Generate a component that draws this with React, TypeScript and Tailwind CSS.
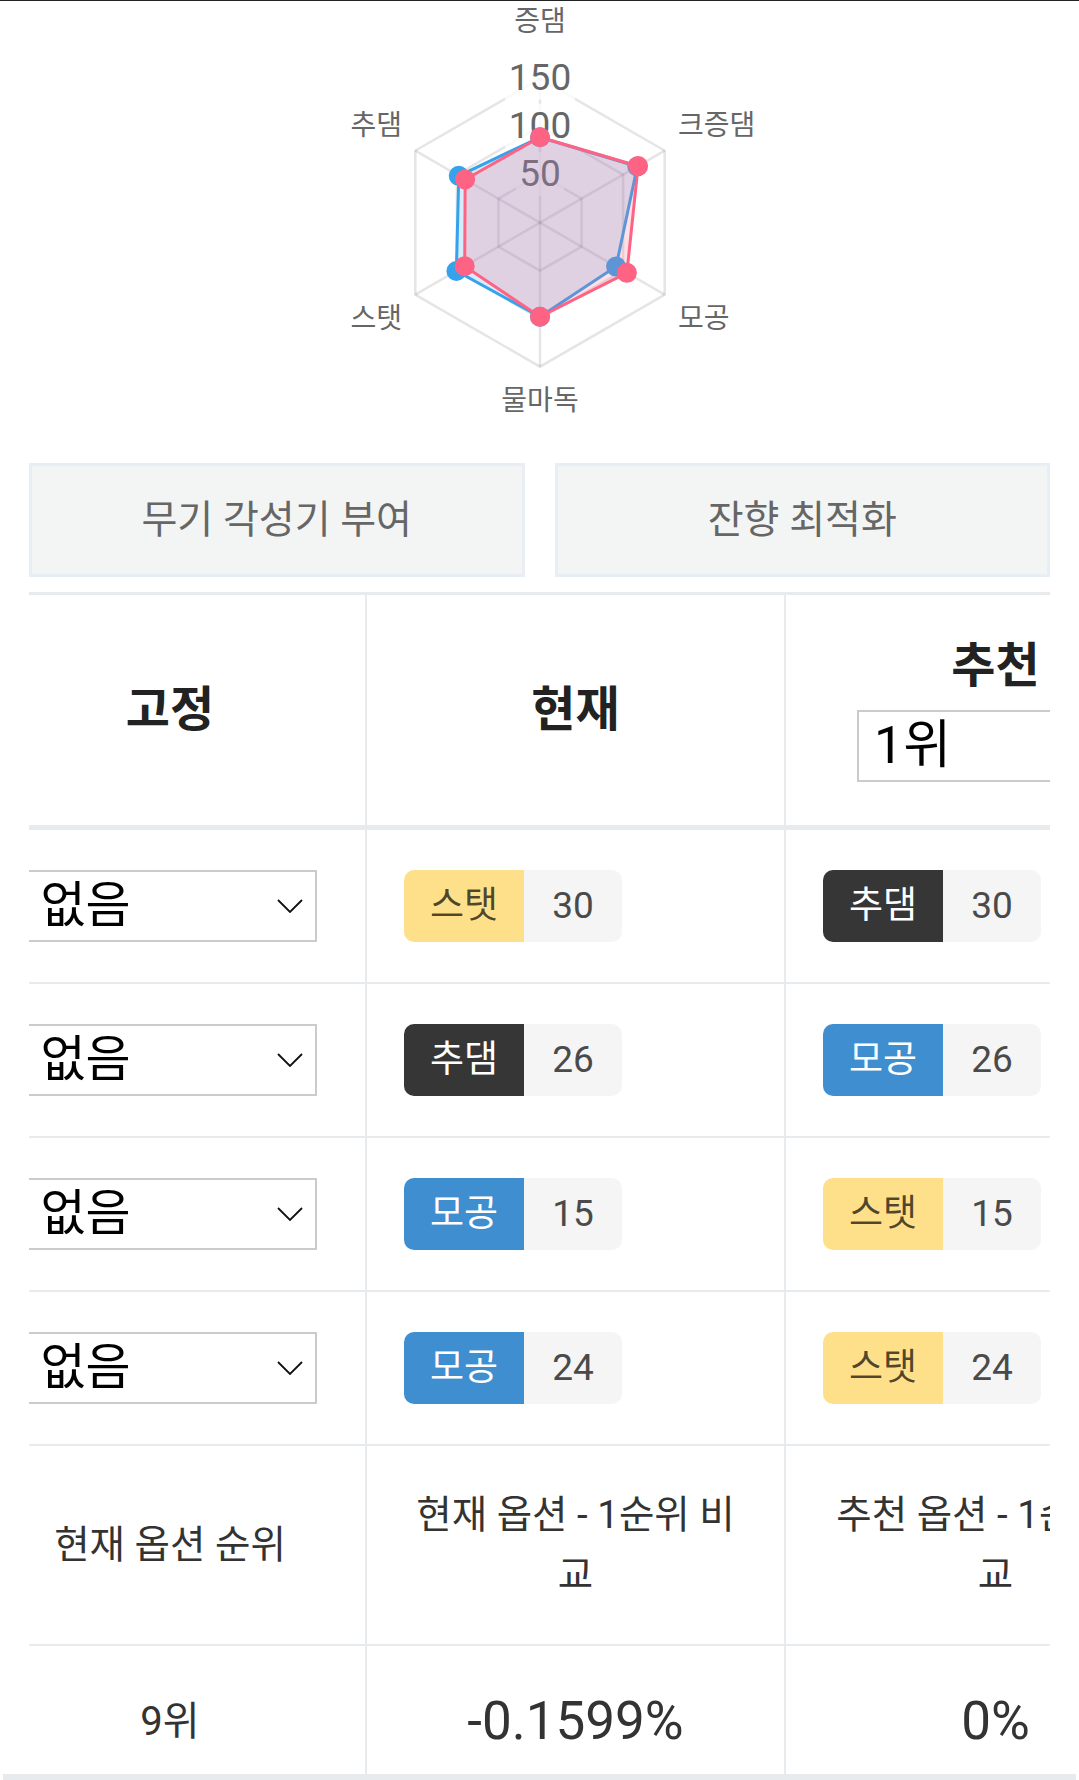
const axes = ['증댐', '크증댐', '모공', '물마독', '스탯', '추댐']
const current = [89, 118, 104.5, 98, 90.6, 90]
const recommended = [89, 117, 91.5, 98, 100.6, 97.7]

const CX = 230
const CY = 221.7
const R = 144
const MAX = 150

function point(i: number, v: number) {
  const a = ((-90 + 60 * i) * Math.PI) / 180
  const r = (v / MAX) * R
  return [CX + r * Math.cos(a), CY + r * Math.sin(a)]
}

function poly(vals: number[]) {
  return vals.map((v, i) => point(i, v).join(',')).join(' ')
}

const labelPos: { x: number; y: number; anchor: 'start' | 'middle' | 'end' }[] = [
  { x: 230, y: 20, anchor: 'middle' },
  { x: 368, y: 124, anchor: 'start' },
  { x: 368, y: 317, anchor: 'start' },
  { x: 230, y: 399, anchor: 'middle' },
  { x: 92, y: 317, anchor: 'end' },
  { x: 92, y: 124, anchor: 'end' },
]

function RadarChart() {
  const ticks = [50, 100, 150]
  return (
    <svg width="460" height="440" viewBox="0 0 460 440">
      {ticks.map(t => (
        <polygon key={t} points={poly(axes.map(() => t))} fill="none" stroke="rgba(0,0,0,0.1)" strokeWidth="2.5" />
      ))}
      {axes.map((_, i) => {
        const [x, y] = point(i, MAX)
        return <line key={i} x1={CX} y1={CY} x2={x} y2={y} stroke="rgba(0,0,0,0.1)" strokeWidth="2.5" />
      })}
      {ticks.map(t => {
        const y = CY - (t / MAX) * R
        const w = t < 100 ? 48 : 70
        return (
          <g key={t}>
            <rect x={CX - w / 2} y={y - 23} width={w} height={44} fill="rgba(255,255,255,0.75)" />
            <text x={CX} y={y - 1} textAnchor="middle" dominantBaseline="central" fontSize="37" fill="#666" fontFamily="Roboto, sans-serif">
              {t}
            </text>
          </g>
        )
      })}
      {[
        { vals: recommended, color: '54,162,235' },
        { vals: current, color: '255,99,132' },
      ].map(({ vals, color }) => (
        <g key={color}>
          <polygon points={poly(vals)} fill={`rgba(${color},0.2)`} stroke={`rgb(${color})`} strokeWidth="3" strokeLinejoin="round" />
          {vals.map((v, i) => {
            const [x, y] = point(i, v)
            return <circle key={i} cx={x} cy={y} r="10" fill={`rgb(${color})`} />
          })}
        </g>
      ))}
      {axes.map((a, i) => (
        <text
          key={a}
          x={labelPos[i].x}
          y={labelPos[i].y}
          textAnchor={labelPos[i].anchor}
          dominantBaseline="central"
          fontSize="28"
          fill="#666"
          fontFamily="Roboto, 'Noto Sans CJK KR', sans-serif"
        >
          {a}
        </text>
      ))}
    </svg>
  )
}

type Kind = 'warning' | 'dark' | 'info'

const tagColors: Record<Kind, string> = {
  warning: 'bg-[#ffe08a] text-[rgba(0,0,0,0.7)]',
  dark: 'bg-[#363636] text-white',
  info: 'bg-[#3e8ed0] text-white',
}

const rows: { cur: [string, Kind]; rec: [string, Kind]; value: number }[] = [
  { cur: ['스탯', 'warning'], rec: ['추댐', 'dark'], value: 30 },
  { cur: ['추댐', 'dark'], rec: ['모공', 'info'], value: 26 },
  { cur: ['모공', 'info'], rec: ['스탯', 'warning'], value: 15 },
  { cur: ['모공', 'info'], rec: ['스탯', 'warning'], value: 24 },
]

function Tag({ label, kind, value }: { label: string; kind: Kind; value: number }) {
  return (
    <div className="flex h-[72px] overflow-hidden rounded-[10px] text-[37px]">
      <span className={`flex w-[120px] items-center justify-center ${tagColors[kind]}`}>{label}</span>
      <span className="flex w-[98px] items-center justify-center bg-[#f5f5f5] text-[#4a4a4a]">{value}</span>
    </div>
  )
}

function SelectBox({ value, width, size, chevron }: { value: string; width: string; size: string; chevron?: boolean }) {
  return (
    <div className={`flex h-[72px] ${width} ${size} items-center justify-between border-2 border-[#cbcbcb] bg-white pl-[15px] pr-[12px] text-black`}>
      <span>{value}</span>
      {chevron && (
        <svg width="26" height="14" viewBox="0 0 26 14">
          <polyline points="1,1 13,13 25,1" fill="none" stroke="#111" strokeWidth="1.8" />
        </svg>
      )}
    </div>
  )
}

const cols = 'grid grid-cols-[392px_419px_419px]'
const cell = 'border-r-2 border-[#e8ebee]'

export default function App() {
  return (
    <div className="min-h-[1780px] border-t border-[#222] bg-white font-[Roboto,'Noto_Sans_CJK_KR',sans-serif]">
      <div className="flex justify-center">
        <RadarChart />
      </div>

      <div className="mx-[29px] mt-[22px] grid grid-cols-2 gap-[30px]">
        {['무기 각성기 부여', '잔향 최적화'].map(t => (
          <button key={t} className="flex h-[114px] items-center justify-center border-[3px] border-[#e7eef6] bg-[#f3f5f5] text-[39px] text-[#666]">
            {t}
          </button>
        ))}
      </div>

      <div className="mx-[29px] mt-[15px] overflow-hidden border-t-[3px] border-[#e8ebee]">
        <div className="-ml-[54px] w-[1230px] text-[#333]">
          <div className={`${cols} h-[235px] border-b-[5px] border-[#e8ebee] text-[48px] font-bold text-[#222]`}>
            <div className={`${cell} flex items-center justify-center`}>고정</div>
            <div className={`${cell} flex items-center justify-center`}>현재</div>
            <div className="flex flex-col items-center justify-center">
              <span className="leading-[1.15]">추천</span>
              <div className="mt-[16px] font-normal">
                <SelectBox value="1위" width="w-[277px]" size="text-[52px]" />
              </div>
            </div>
          </div>

          {rows.map((r, i) => (
            <div key={i} className={`${cols} h-[154px] border-b-2 border-[#e8ebee]`}>
              <div className={`${cell} flex items-center justify-center`}>
                <SelectBox value="없음" width="w-[293px]" size="text-[49px]" chevron />
              </div>
              <div className={`${cell} flex items-center pl-[37px]`}>
                <Tag label={r.cur[0]} kind={r.cur[1]} value={r.value} />
              </div>
              <div className="flex items-center pl-[37px]">
                <Tag label={r.rec[0]} kind={r.rec[1]} value={r.value} />
              </div>
            </div>
          ))}

          <div className={`${cols} h-[200px] border-b-2 border-[#e8ebee] text-[38.5px] leading-[60px]`}>
            <div className={`${cell} flex items-center justify-center text-center`}>현재 옵션 순위</div>
            <div className={`${cell} flex items-center justify-center px-[40px] text-center`}>현재 옵션 - 1순위 비교</div>
            <div className="flex items-center justify-center px-[40px] text-center">추천 옵션 - 1순위 비교</div>
          </div>

          <div className={`${cols} h-[128px] pt-[24px]`}>
            <div className={`${cell} -mt-[24px] flex items-center justify-center pt-[24px] text-[40px]`}>9위</div>
            <div className={`${cell} -mt-[24px] flex items-center justify-center pt-[24px] text-[53px]`}>-0.1599%</div>
            <div className="flex items-center justify-center text-[53px]">0%</div>
          </div>
        </div>
      </div>
      <div className="mx-[3px] h-[6px] bg-[#e8ebee]" />
    </div>
  )
}
